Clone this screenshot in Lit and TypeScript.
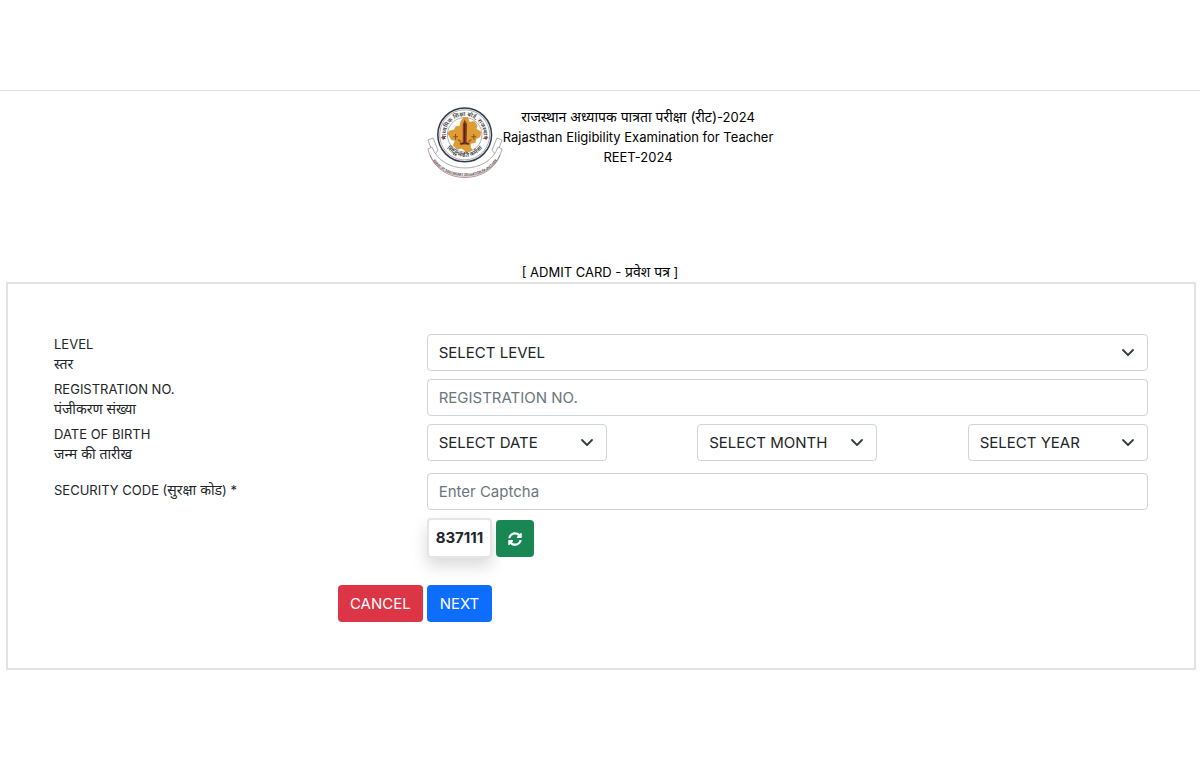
import { LitElement, html, css, svg } from "lit";
import { customElement, property } from "lit/decorators.js";

@customElement("board-emblem")
class BoardEmblem extends LitElement {
  static styles = css`
    :host { display: block; }
    svg { display: block; width: 76px; height: 72px; }
    .ring-text { font: 600 6px "Noto Sans", "Noto Sans Devanagari", sans-serif; fill: #3d3b40; }
    .ribbon-text { font: 700 3px Inter, sans-serif; fill: #4b3034; }
  `;

  render() {
    return html`
      <svg viewBox="0 0 76 72" role="img" aria-label="Board of Secondary Education Rajasthan">
        <defs>
          <path id="ring-top" d="M19.700 35.700A19.500 19.500 0 1 1 56.300 35.700" />
          <path id="ring-bottom" d="M15 29a23 23 0 0 0 46 0" />
          <path id="ribbon-arc" d="M4 49C15 75 61 75 72 49" />
        </defs>
        <g fill="#fff" stroke="#96949a" stroke-width="0.8" stroke-linejoin="round">
          <path d="M1 33L6 31L11 43L7 49Z" />
          <path d="M75 33L70 31L65 43L69 49Z" />
          <path d="M1 42L5 40C15 68 61 68 71 40L75 42C67 78 9 78 1 42Z" />
        </g>
        <path d="M3 48C14 78 62 78 73 48" fill="none" stroke="#9e6670" stroke-width="0.7" />
        <g transform="translate(1.200 0) scale(.96)">
          <circle cx="38" cy="29" r="28" fill="#fff" stroke="#343b49" stroke-width="1.600" />
          <circle cx="38" cy="29" r="26" fill="none" stroke="#6d717b" stroke-width="1" stroke-dasharray="0.8 0.4" />
          <circle cx="38" cy="29" r="18" fill="#fffdf8" stroke="#77767c" stroke-width="0.6" />
          <path
            d="M22 25L27 24L29 20L33 20L34 15L37 11L41 11L43 16L48 15L51 19L50 23L55 26L54 31L50 33L49 37L44 38L44 42L46 45L40 47L35 43L30 44L26 40L28 35L24 34L22 30L20 28Z"
            fill="#dd9d31" stroke="#c08a36" stroke-width="0.5" />
          <path d="M38 13L40.500 18L40 37H43V39H33V37H36L36 18Z" fill="#8c3825" />
          <path d="M38 17V36M34 39L38 37L42 39" fill="none" stroke="#3f2421" stroke-width="1" />
          <path d="M26 31h5M28.500 28v6M45 31h5M47.500 28v6M31 34l3 2M42 36l3-2" stroke="#8a4a28" stroke-width="1.100" />
          <path d="M13.500 32h4M15 30l1 4M58.500 32h4M61 30l-1 4" stroke="#b65b65" stroke-width="1.300" />
          ${svg`
            <text class="ring-text" text-anchor="middle"><textPath href="#ring-top" startOffset="50%">माध्यमिक शिक्षा बोर्ड, राजस्थान</textPath></text>
            <text class="ring-text" text-anchor="middle"><textPath href="#ring-bottom" startOffset="50%">सिद्धिर्भवति कर्मजा</textPath></text>
          `}
        </g>
        ${svg`<text class="ribbon-text" text-anchor="middle"><textPath href="#ribbon-arc" startOffset="50%">BOARD OF SECONDARY EDUCATION RAJASTHAN</textPath></text>`}
      </svg>
    `;
  }
}

@customElement("app-root")
class AppRoot extends LitElement {
  @property() code = "837111";

  static styles = css`
    :host {
      display: block;
      min-height: 100vh;
      background: #fff;
      color: #212529;
      font: 13px/20px Inter, "Noto Sans", "Noto Sans Devanagari", sans-serif;
    }
    *, *::before, *::after { box-sizing: border-box; }
    [lang="hi"] { font-size: 14px; }
    .topbar { height: 91px; border-bottom: 1px solid #e0e0e0; }
    .masthead {
      display: flex;
      justify-content: center;
      align-items: flex-start;
      padding: 16px 0 83px;
      color: #000;
    }
    .titles { text-align: center; }
    .titles p, .titles h1 { margin: 0; font-weight: 400; line-height: 20px; }
    .titles h1 { font-size: 13px; }
    .caption { margin: 0; color: #000; text-align: center; font-size: 13px; font-weight: 400; line-height: 20px; }
    .panel { margin: 0 4px 0 6px; padding: 50px 34px 46px; border: 2px solid #e3e3e3; }
    .row { display: grid; grid-template-columns: 1fr 2fr; margin-bottom: 5px; }
    .row > * { padding: 0 12px; min-width: 0; }
    .row.wide { margin-bottom: 9px; }
    .label { display: block; }
    .label .line { display: block; }
    .row > .single { padding-top: 7px; }
    .control {
      display: block;
      width: 100%;
      height: 37px;
      padding: 0 11px;
      border: 1px solid #ced4da;
      border-radius: 4px;
      background: #fff;
      color: #212529;
      font: 15px/24px Inter, sans-serif;
    }
    .control::placeholder { color: #6c757d; opacity: 1; }
    .picker { position: relative; display: block; }
    .picker select { appearance: none; padding-right: 34px; }
    .picker svg {
      position: absolute;
      right: 12px;
      top: 10px;
      width: 16px;
      height: 16px;
      pointer-events: none;
    }
    .dates { display: flex; justify-content: space-between; }
    .dates .picker { width: 25%; }
    .verify { display: flex; align-items: flex-start; gap: 4px; margin-top: 8px; }
    .code {
      padding: 8px 7px;
      border: 2px solid #e4e5e6;
      border-radius: 4px;
      background: #fff;
      box-shadow: 0 8px 16px rgba(0, 0, 0, 0.15);
      font-size: 15px;
      font-weight: 700;
      line-height: 20px;
    }
    .btn {
      height: 37px;
      padding: 0 12px;
      border: 0;
      border-radius: 4px;
      color: #fff;
      font: 15px/24px Inter, sans-serif;
      cursor: pointer;
    }
    .refresh { margin-top: 2px; background: #198754; }
    .refresh svg { display: block; width: 14px; height: 14px; }
    .cancel { background: #dc3545; }
    .next { padding: 0 13px; background: #0d6efd; }
    .actions { margin: 27px 0 0; }
    .actions .before { padding-right: 4px; margin-right: -12px; text-align: right; }
  `;

  picker(id: string, text: string, label = "") {
    return html`
      <span class="picker">
        <select class="control" id=${id} aria-label=${label || text}>
          <option>${text}</option>
        </select>
        <svg viewBox="0 0 16 16" aria-hidden="true">
          <path d="M3 6l5 5 5-5" fill="none" stroke="#343a40" stroke-width="1.800" stroke-linecap="round" stroke-linejoin="round" />
        </svg>
      </span>
    `;
  }

  render() {
    return html`
      <div class="topbar"></div>
      <header class="masthead">
        <board-emblem></board-emblem>
        <div class="titles">
          <p><span lang="hi">राजस्थान अध्यापक पात्रता परीक्षा (रीट)</span>-2024</p>
          <h1>Rajasthan Eligibility Examination for Teacher</h1>
          <p>REET-2024</p>
        </div>
      </header>
      <main>
        <h2 class="caption">[ ADMIT CARD - <span lang="hi">प्रवेश पत्र</span> ]</h2>
        <form class="panel" @submit=${(e: Event) => e.preventDefault()}>
          <div class="row">
            <label class="label" for="level"><span class="line">LEVEL</span><span class="line" lang="hi">स्तर</span></label>
            <div>${this.picker("level", "SELECT LEVEL", "LEVEL")}</div>
          </div>
          <div class="row">
            <label class="label" for="registration"><span class="line">REGISTRATION NO.</span><span class="line" lang="hi">पंजीकरण संख्या</span></label>
            <div><input class="control" id="registration" placeholder="REGISTRATION NO." /></div>
          </div>
          <div class="row wide">
            <label class="label" for="date"><span class="line">DATE OF BIRTH</span><span class="line" lang="hi">जन्म की तारीख</span></label>
            <div class="dates">
              ${this.picker("date", "SELECT DATE")}
              ${this.picker("month", "SELECT MONTH")}
              ${this.picker("year", "SELECT YEAR")}
            </div>
          </div>
          <div class="row">
            <label class="label single" for="captcha">SECURITY CODE (<span lang="hi">सुरक्षा कोड</span>) *</label>
            <div>
              <input class="control" id="captcha" placeholder="Enter Captcha" />
              <div class="verify">
                <output class="code" for="captcha">${this.code}</output>
                <button class="btn refresh" type="button" aria-label="Refresh code">
                  <svg viewBox="0 0 512 512" fill="#fff" aria-hidden="true">
                    <path d="M370.720 133.280C339.458 104.008 298.888 87.962 255.848 88c-77.458.068-144.328 53.178-162.791 126.850-1.344 5.363-6.122 9.150-11.651 9.150H24.103c-7.498 0-13.194-6.807-11.807-14.176C33.933 94.924 134.813 8 256 8c66.448 0 126.791 26.136 171.315 68.685L463.030 40.970C478.149 25.851 504 36.559 504 57.941V192c0 13.255-10.745 24-24 24H345.941c-21.382 0-32.090-25.851-16.971-40.971l41.750-41.749zM32 296h134.059c21.382 0 32.090 25.851 16.971 40.971l-41.750 41.750c31.262 29.273 71.835 45.319 114.876 45.280 77.418-.070 144.315-53.144 162.787-126.849 1.344-5.363 6.122-9.150 11.651-9.150h57.304c7.498 0 13.194 6.807 11.807 14.176C478.067 417.076 377.187 504 256 504c-66.448 0-126.791-26.136-171.315-68.685L48.970 471.030C33.851 486.149 8 475.441 8 454.059V320c0-13.255 10.745-24 24-24z" />
                  </svg>
                </button>
              </div>
            </div>
          </div>
          <div class="row actions">
            <div class="before"><button class="btn cancel" type="reset">CANCEL</button></div>
            <div class="after"><button class="btn next" type="submit">NEXT</button></div>
          </div>
        </form>
      </main>
    `;
  }
}
